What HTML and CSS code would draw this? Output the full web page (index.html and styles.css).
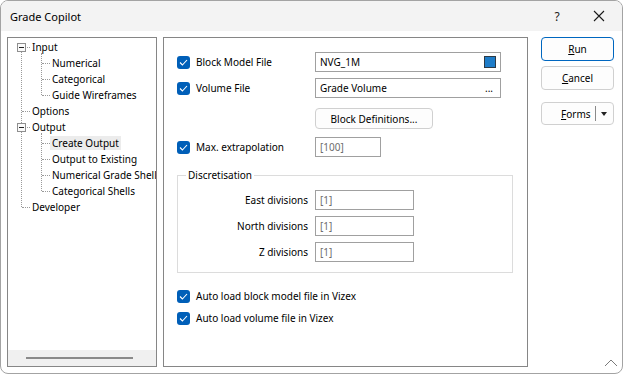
FILE: index.html
```html
<!doctype html>
<html>
    <head>
        <title>Grade Copilot</title>
        <link rel="stylesheet" href="styles.css">
    </head>
    <body>
        <div class="window">

            <div class="titlebar">
                <span class="title">Grade Copilot</span>
                <span class="tb-btn help">?</span>
                <span class="tb-btn">
                    <svg width="12" height="12" viewBox="0 0 12 12"><path d="M1 1 L11 11 M11 1 L1 11" stroke="#1a1a1a" stroke-width="1.1" fill="none"/></svg>
                </span>
            </div>

            <div class="content">

                <!-- tree of pages -->
                <div class="tree-panel">
                    <div class="tree-area">
                        <ul class="tree">
                            <li><span class="toggle"></span><span class="label">Input</span>
                                <ul>
                                    <li><span class="label">Numerical</span></li>
                                    <li><span class="label">Categorical</span></li>
                                    <li><span class="label">Guide Wireframes</span></li>
                                </ul>
                            </li>
                            <li><span class="label">Options</span></li>
                            <li><span class="toggle"></span><span class="label">Output</span>
                                <ul>
                                    <li><span class="label selected">Create Output</span></li>
                                    <li><span class="label">Output to Existing</span></li>
                                    <li><span class="label">Numerical Grade Shell</span></li>
                                    <li><span class="label">Categorical Shells</span></li>
                                </ul>
                            </li>
                            <li><span class="label">Developer</span></li>
                        </ul>
                    </div>
                    <div class="hscroll"><div class="thumb"></div></div>
                </div>

                <!-- form -->
                <div class="main-panel">
                    <div class="row">
                        <label class="check"><span class="box"><svg width="9" height="7" viewBox="0 0 9 7"><path d="M1 3.5 L3.4 6 L8 1" stroke="#fff" stroke-width="1.1" fill="none"/></svg></span>Block Model File</label>
                        <div class="field w-file">NVG_1M<span class="swatch"></span></div>
                    </div>
                    <div class="row">
                        <label class="check"><span class="box"><svg width="9" height="7" viewBox="0 0 9 7"><path d="M1 3.5 L3.4 6 L8 1" stroke="#fff" stroke-width="1.1" fill="none"/></svg></span>Volume File</label>
                        <div class="field w-file">Grade Volume<span class="dots">...</span></div>
                    </div>
                    <div class="btn-row">
                        <button class="btn-def">Block Definitions...</button>
                    </div>
                    <div class="row">
                        <label class="check"><span class="box"><svg width="9" height="7" viewBox="0 0 9 7"><path d="M1 3.5 L3.4 6 L8 1" stroke="#fff" stroke-width="1.1" fill="none"/></svg></span>Max. extrapolation</label>
                        <div class="field w-small dim">[100]</div>
                    </div>

                    <fieldset class="group">
                        <legend>Discretisation</legend>
                        <div class="grow">
                            <span class="glabel">East divisions</span>
                            <div class="field w-div dim">[1]</div>
                        </div>
                        <div class="grow">
                            <span class="glabel">North divisions</span>
                            <div class="field w-div dim">[1]</div>
                        </div>
                        <div class="grow">
                            <span class="glabel">Z divisions</span>
                            <div class="field w-div dim">[1]</div>
                        </div>
                    </fieldset>

                    <div class="auto-rows">
                        <label class="check long"><span class="box"><svg width="9" height="7" viewBox="0 0 9 7"><path d="M1 3.5 L3.4 6 L8 1" stroke="#fff" stroke-width="1.1" fill="none"/></svg></span>Auto load block model file in Vizex</label>
                        <label class="check long"><span class="box"><svg width="9" height="7" viewBox="0 0 9 7"><path d="M1 3.5 L3.4 6 L8 1" stroke="#fff" stroke-width="1.1" fill="none"/></svg></span>Auto load volume file in Vizex</label>
                    </div>
                </div>

                <!-- dialog buttons -->
                <div class="buttons">
                    <button class="btn default"><u>R</u>un</button>
                    <button class="btn"><u>C</u>ancel</button>
                    <button class="btn forms"><span class="forms-text"><u>F</u>orms</span><span class="split"></span><span class="arrow"></span></button>
                </div>

            </div>

            <svg class="grip" width="14" height="8" viewBox="0 0 14 8"><path d="M1 7 L7 1 L13 7" stroke="#7a7a7a" stroke-width="1" fill="none"/></svg>
        </div>
    </body>
</html>
```

FILE: styles.css
```css
body {
margin: 0;
font-family: "Noto Sans", sans-serif;
font-size: 10px;
color: #000;
}

.window {
position: relative;
width: 623px;
height: 374px;
box-sizing: border-box;
border: 1px solid #a3a3a3;
border-radius: 8px;
background: #fff;
overflow: hidden;
}

/* title bar */
.titlebar {
height: 30px;
background: #f3f3f3;
display: flex;
align-items: center;
padding-left: 9px;
}

.title {
flex: 1;
font-size: 11px;
}

.tb-btn {
width: 46px;
height: 30px;
display: flex;
align-items: center;
justify-content: center;
font-size: 12px;
color: #1a1a1a;
}

.tb-btn.help {
padding-left: 8px;
box-sizing: border-box;
}

.content {
display: flex;
padding: 6px 0 0 6px;
}

/* tree */
.tree-panel {
width: 150px;
height: 330px;
box-sizing: border-box;
border: 1px solid #868686;
display: flex;
flex-direction: column;
}

.tree-area {
flex: 1;
overflow: hidden;
}

.tree, .tree ul {
list-style: none;
margin: 0;
padding: 0;
position: relative;
white-space: nowrap;
}

.tree {
padding-top: 1px;
}

.tree li {
position: relative;
line-height: 16px;
}

.tree > li {
padding-left: 22px;
}

.tree ul > li {
padding-left: 20px;
}

.tree::before {
content: "";
position: absolute;
left: 13px;
top: 14px;
bottom: 8px;
border-left: 1px dotted #9a9a9a;
}

.tree ul::before {
content: "";
position: absolute;
left: 11px;
top: -2px;
bottom: 8px;
border-left: 1px dotted #9a9a9a;
}

.tree > li::before {
content: "";
position: absolute;
left: 14px;
top: 8px;
width: 8px;
border-top: 1px dotted #9a9a9a;
}

.tree ul > li::before {
content: "";
position: absolute;
left: 12px;
top: 8px;
width: 8px;
border-top: 1px dotted #9a9a9a;
}

.toggle {
position: absolute;
left: 9px;
top: 4px;
width: 9px;
height: 9px;
box-sizing: border-box;
border: 1px solid #8f8f8f;
background: #fafafa;
z-index: 1;
}

.toggle::after {
content: "";
position: absolute;
left: 1px;
top: 3px;
width: 5px;
height: 1px;
background: #222;
}

.label {
padding: 0 2px;
}

.selected {
background: #ececec;
}

.hscroll {
height: 16px;
background: #f0f0f0;
padding: 7px 0 0 18px;
box-sizing: border-box;
}

.thumb {
width: 107px;
height: 2px;
background: #8a8a8a;
}

/* main form */
.main-panel {
width: 365px;
height: 330px;
margin-left: 6px;
box-sizing: border-box;
border: 1px solid #868686;
padding: 14px 0 0 13px;
display: flex;
flex-direction: column;
align-items: flex-start;
}

.row {
display: flex;
align-items: center;
height: 20px;
margin-bottom: 6px;
}

.check {
display: flex;
align-items: center;
width: 138px;
}

.check.long {
width: auto;
height: 20px;
margin-bottom: 2px;
}

.box {
width: 13px;
height: 13px;
box-sizing: border-box;
border-radius: 3px;
background: #005fb8;
display: flex;
align-items: center;
justify-content: center;
margin-right: 6px;
}

.field {
height: 20px;
box-sizing: border-box;
border: 1px solid #a0a0a0;
padding: 0 4px;
display: flex;
align-items: center;
}

.w-file {
width: 186px;
}

.w-small {
width: 66px;
}

.w-div {
width: 99px;
}

.dim {
color: #6d6d6d;
}

.swatch {
margin-left: auto;
width: 12px;
height: 12px;
box-sizing: border-box;
background: #1e7cc8;
border: 1px solid #2d3a46;
}

.dots {
margin-left: auto;
margin-right: 3px;
}

.btn-row {
display: flex;
padding: 4px 0 0 138px;
margin-bottom: 8px;
}

.btn-def {
width: 118px;
height: 21px;
font-family: inherit;
font-size: 10px;
color: #000;
background: #fdfdfd;
border: 1px solid #d0d0d0;
border-radius: 4px;
padding: 0;
}

.group {
width: 336px;
box-sizing: border-box;
margin: 4px 0 0 0;
padding: 7px 0 10px 0;
border: 1px solid #dcdcdc;
}

.group legend {
margin-left: 8px;
padding: 0 2px;
line-height: 16px;
}

.grow {
display: flex;
align-items: center;
height: 20px;
margin-bottom: 6px;
}

.grow:last-child {
margin-bottom: 0;
}

.glabel {
width: 130px;
text-align: right;
margin-right: 7px;
}

.auto-rows {
margin-top: 13px;
}

/* dialog buttons */
.buttons {
width: 73px;
margin-left: 13px;
display: flex;
flex-direction: column;
}

.btn {
height: 24px;
font-family: inherit;
font-size: 10px;
color: #000;
background: #fdfdfd;
border: 1px solid #d0d0d0;
border-radius: 4px;
margin-bottom: 5px;
padding: 0;
}

.btn.default {
border-color: #0067c0;
}

.btn.forms {
margin-top: 7px;
height: 23px;
display: flex;
align-items: center;
}

.forms-text {
flex: 1;
padding-left: 19px;
text-align: left;
}

.split {
width: 1px;
height: 15px;
background: #8a8a8a;
}

.arrow {
width: 0;
height: 0;
margin: 0 6px 0 5px;
border-left: 3.5px solid transparent;
border-right: 3.5px solid transparent;
border-top: 4px solid #222;
}

.grip {
position: absolute;
right: 4px;
bottom: 6px;
}
```
